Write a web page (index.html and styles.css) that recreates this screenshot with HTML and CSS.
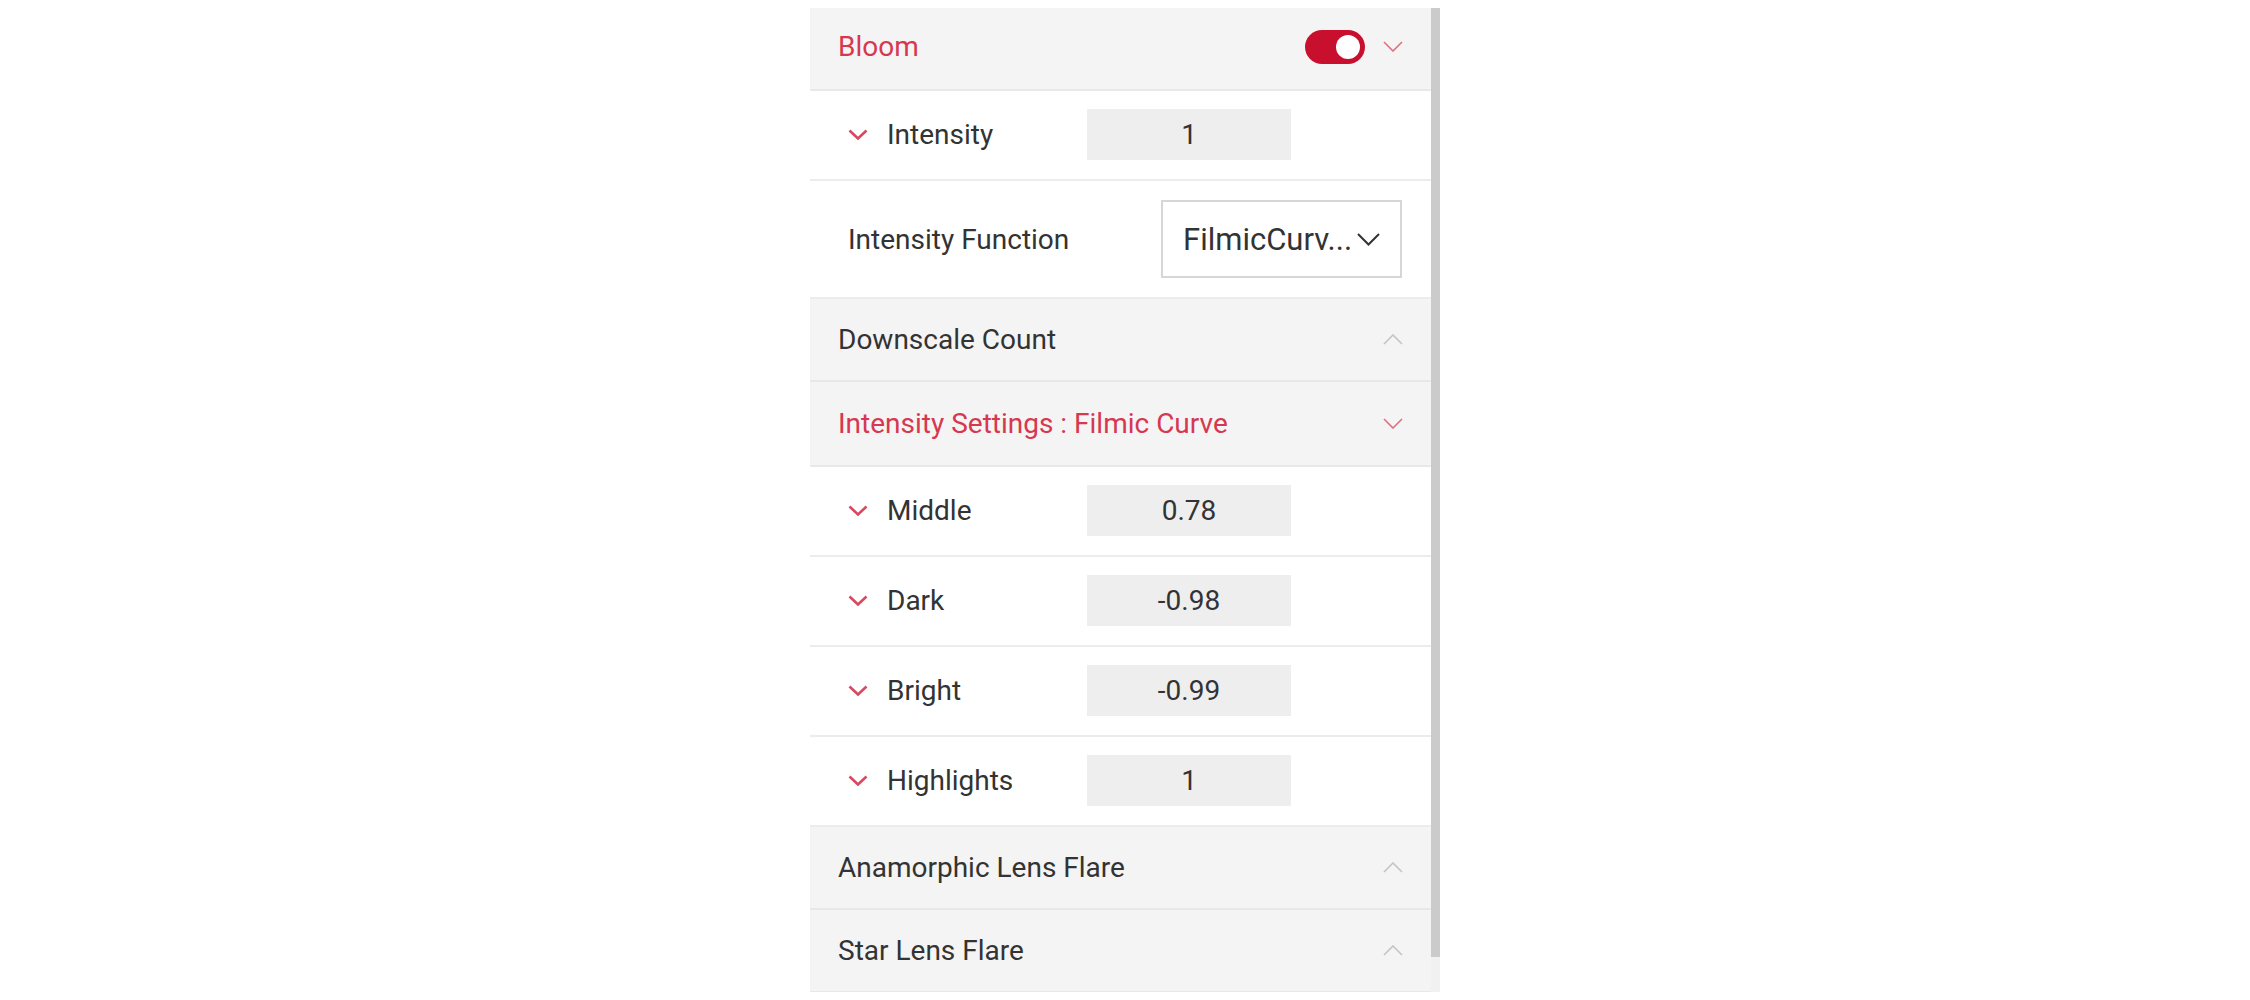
FILE: index.html
```html
<!DOCTYPE html>
<html>
<head>
    <title>Post Processing</title>
    <link rel="stylesheet" href="styles.css">
</head>
<body>
    <div class="panel">
        <div class="panel-body">
            <div class="section-head active first">
                <span class="section-title">Bloom</span>
                <div class="head-tools">
                    <span class="toggle on"><span class="knob"></span></span>
                    <svg class="chev-head red" viewBox="0 0 20 11"><path d="M1 1 L10 10 L19 1"/></svg>
                </div>
            </div>

            <div class="param-row">
                <svg class="chev-param" viewBox="0 0 20 11"><path d="M1.5 1.5 L10 9.5 L18.5 1.5"/></svg>
                <span class="param-label">Intensity</span>
                <div class="param-value">1</div>
            </div>

            <div class="select-row">
                <span class="select-label">Intensity Function</span>
                <div class="select-box">
                    <span class="select-text">FilmicCurv...</span>
                    <svg class="chev-select" viewBox="0 0 23 13"><path d="M1 1 L11.5 11.5 L22 1"/></svg>
                </div>
            </div>

            <div class="section-head">
                <span class="section-title">Downscale Count</span>
                <div class="head-tools">
                    <svg class="chev-head grey" viewBox="0 0 20 11"><path d="M1 10 L10 1 L19 10"/></svg>
                </div>
            </div>

            <div class="section-head active tall">
                <span class="section-title">Intensity Settings : Filmic Curve</span>
                <div class="head-tools">
                    <svg class="chev-head red" viewBox="0 0 20 11"><path d="M1 1 L10 10 L19 1"/></svg>
                </div>
            </div>

            <div class="param-row">
                <svg class="chev-param" viewBox="0 0 20 11"><path d="M1.5 1.5 L10 9.5 L18.5 1.5"/></svg>
                <span class="param-label">Middle</span>
                <div class="param-value">0.78</div>
            </div>
            <div class="param-row">
                <svg class="chev-param" viewBox="0 0 20 11"><path d="M1.5 1.5 L10 9.5 L18.5 1.5"/></svg>
                <span class="param-label">Dark</span>
                <div class="param-value">-0.98</div>
            </div>
            <div class="param-row">
                <svg class="chev-param" viewBox="0 0 20 11"><path d="M1.5 1.5 L10 9.5 L18.5 1.5"/></svg>
                <span class="param-label">Bright</span>
                <div class="param-value">-0.99</div>
            </div>
            <div class="param-row">
                <svg class="chev-param" viewBox="0 0 20 11"><path d="M1.5 1.5 L10 9.5 L18.5 1.5"/></svg>
                <span class="param-label">Highlights</span>
                <div class="param-value">1</div>
            </div>

            <div class="section-head">
                <span class="section-title">Anamorphic Lens Flare</span>
                <div class="head-tools">
                    <svg class="chev-head grey" viewBox="0 0 20 11"><path d="M1 10 L10 1 L19 10"/></svg>
                </div>
            </div>
            <div class="section-head">
                <span class="section-title">Star Lens Flare</span>
                <div class="head-tools">
                    <svg class="chev-head grey" viewBox="0 0 20 11"><path d="M1 10 L10 1 L19 10"/></svg>
                </div>
            </div>
            <div class="panel-end"></div>
        </div>
        <div class="scrollbar"><div class="scroll-thumb"></div></div>
    </div>
</body>
</html>
```

FILE: styles.css
```css
body {
    margin: 8px;
    background-color: #ffffff;
    font-family: Roboto, "Liberation Sans", sans-serif;
    color: #333;
}
.panel {
    display: flex;
    width: 630px;
    height: calc(100vh - 16px);
    margin: 0 auto;
    overflow: hidden;
    background-color: #fff;
}
.panel-body {
    flex: 1;
    overflow: hidden;
}
.scrollbar {
    width: 9px;
    background-color: #f1f1f1;
}
.scroll-thumb {
    height: 949px;
    background-color: #cbcbcb;
}
.section-head {
    display: flex;
    align-items: center;
    justify-content: space-between;
    height: 81px;
    padding: 0 28px;
    background-color: #f4f4f4;
    border-bottom: 2px solid #e8e8e8;
    font-size: 28px;
    color: #333;
}
.section-head.first {
    height: 77px;
    padding-bottom: 4px;
    box-sizing: content-box;
}
.section-head.tall {
    height: 83px;
}
.section-head.active {
    color: #d7384f;
}
.head-tools {
    display: flex;
    align-items: center;
    gap: 18px;
}
.toggle {
    position: relative;
    display: inline-block;
    width: 60px;
    height: 34px;
    border-radius: 17px;
    background-color: #c8102e;
}
.toggle .knob {
    position: absolute;
    top: 5px;
    right: 5px;
    width: 24px;
    height: 24px;
    border-radius: 50%;
    background-color: #fff;
}
.chev-head {
    width: 20px;
    height: 11px;
    fill: none;
    stroke-width: 1.6;
}
.chev-head.red {
    stroke: #e0707f;
}
.chev-head.grey {
    stroke: #c4c4c4;
}
.param-row {
    display: flex;
    align-items: center;
    height: 86px;
    padding: 0 0 2px 38px;
    border-bottom: 2px solid #ececec;
    font-size: 28px;
}
.chev-param {
    width: 20px;
    height: 11px;
    fill: none;
    stroke: #d9485f;
    stroke-width: 2.6;
    margin-right: 19px;
}
.param-label {
    width: 200px;
}
.param-value {
    width: 204px;
    height: 51px;
    line-height: 51px;
    text-align: center;
    background-color: #eeeeee;
}
.select-row {
    display: flex;
    align-items: center;
    justify-content: space-between;
    height: 116px;
    padding: 0 29px 0 38px;
    border-bottom: 2px solid #ececec;
    font-size: 28px;
}
.select-box {
    display: flex;
    align-items: center;
    justify-content: space-between;
    width: 241px;
    height: 78px;
    box-sizing: border-box;
    padding: 0 20px 0 20px;
    border: 2px solid #d6d6d6;
    font-size: 31px;
}
.chev-select {
    width: 23px;
    height: 13px;
    fill: none;
    stroke: #333;
    stroke-width: 2;
}
.panel-end {
    height: 36px;
    background-color: #f4f4f4;
}
```
